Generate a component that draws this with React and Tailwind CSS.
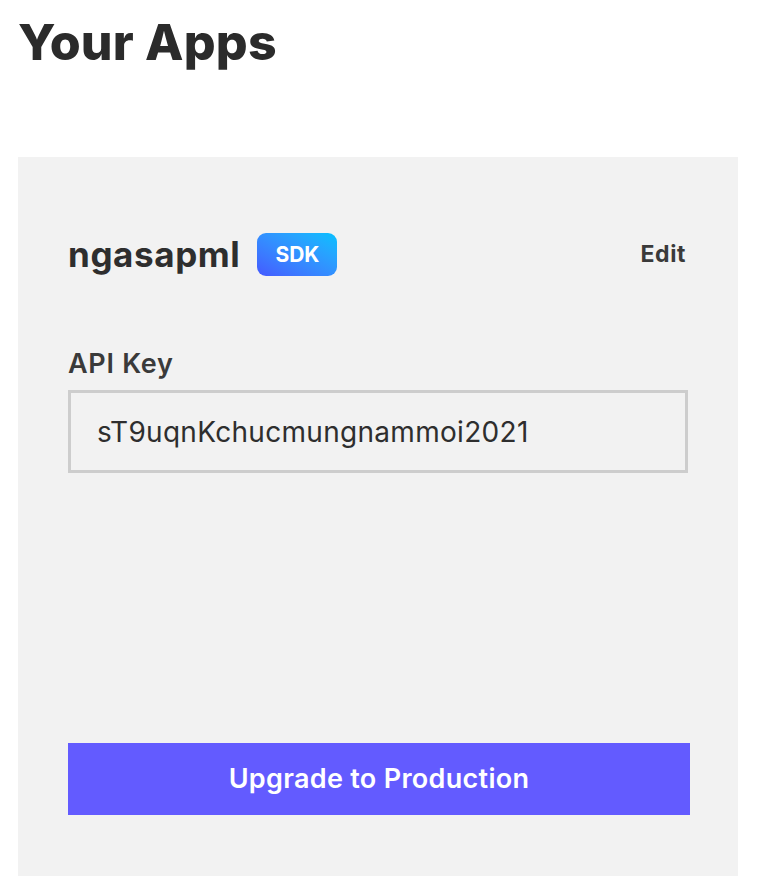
import React from "react";

const App = () => {
  return (
    <div className="min-h-[896px] bg-white px-[18px] pt-[12px] font-['Inter',sans-serif] text-[#333]">
      <h1 className="text-[50px] leading-[60px] font-extrabold tracking-[0.2px] text-[#2b2b2b]">Your Apps</h1>
      <div className="mt-[85px] w-[720px] h-[719px] bg-[#f2f2f2] px-[50px] pt-[76px] flex flex-col">
        <div className="flex items-center justify-between h-[43px]">
          <div className="flex items-center gap-[17px]">
            <span className="text-[35px] font-bold tracking-[0.6px] text-[#2e2e2e] leading-none">ngasapml</span>
            <span className="h-[43px] w-[80px] rounded-[9px] bg-gradient-to-tr from-[#4458ff] to-[#00c0ff] text-white text-[21px] font-bold flex items-center justify-center">
              SDK
            </span>
          </div>
          <button className="text-[23px] font-bold tracking-[0.6px] text-[#3a3a3a] pr-[2px]">Edit</button>
        </div>
        <label className="mt-[70px] text-[27px] font-semibold tracking-[0.7px] text-[#3a3a3a] leading-[36px]">API Key</label>
        <div className="mt-[8px] h-[83px] w-[620px] border-[3px] border-[#cdcdcd] flex items-center px-[26px]">
          <span className="text-[28px] tracking-[0.3px] text-[#2e2e2e]">sT9uqnKchucmungnammoi2021</span>
        </div>
        <button className="mt-auto mb-[61px] h-[72px] w-[622px] bg-[#635bff] text-white text-[27px] font-semibold tracking-[0.3px]">
          Upgrade to Production
        </button>
      </div>
    </div>
  );
};

export default App;
